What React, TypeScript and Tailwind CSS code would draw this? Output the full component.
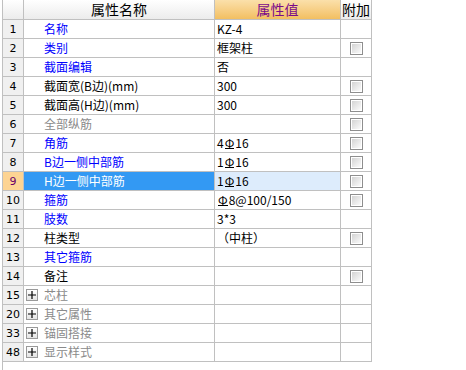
import React from "react";

type Row = {
  no: string;
  name: string;
  value?: string;
  color: "blue" | "black" | "gray";
  check?: boolean;
  group?: boolean;
  selected?: boolean;
};

const rows: Row[] = [
  { no: "1", name: "名称", value: "KZ-4", color: "blue" },
  { no: "2", name: "类别", value: "框架柱", color: "blue", check: true },
  { no: "3", name: "截面编辑", value: "否", color: "blue" },
  { no: "4", name: "截面宽(B边)(mm)", value: "300", color: "black", check: true },
  { no: "5", name: "截面高(H边)(mm)", value: "300", color: "black", check: true },
  { no: "6", name: "全部纵筋", color: "gray", check: true },
  { no: "7", name: "角筋", value: "4|16", color: "blue", check: true },
  { no: "8", name: "B边一侧中部筋", value: "1|16", color: "blue", check: true },
  { no: "9", name: "H边一侧中部筋", value: "1|16", color: "blue", check: true, selected: true },
  { no: "10", name: "箍筋", value: "|8@100/150", color: "blue", check: true },
  { no: "11", name: "肢数", value: "3*3", color: "blue" },
  { no: "12", name: "柱类型", value: "（中柱）", color: "black", check: true },
  { no: "13", name: "其它箍筋", color: "blue" },
  { no: "14", name: "备注", color: "black", check: true },
  { no: "15", name: "芯柱", color: "gray", group: true },
  { no: "20", name: "其它属性", color: "gray", group: true },
  { no: "33", name: "锚固搭接", color: "gray", group: true },
  { no: "48", name: "显示样式", color: "gray", group: true },
];

const font = { fontFamily: '"Noto Sans CJK SC", "DejaVu Sans", sans-serif' };

function Value({ text }: { text: string }) {
  // "|" marks the rebar grade symbol
  const parts = text.split("|");
  return (
    <span className="whitespace-pre">
      {parts.map((p, i) => (
        <React.Fragment key={i}>
          {i > 0 && <span className="mx-[1px] inline-block border-b border-black leading-[11px]">Φ</span>}
          {p}
        </React.Fragment>
      ))}
    </span>
  );
}

function Check() {
  return (
    <div className="h-[13px] w-[13px] border border-[#8e8e8e] bg-white p-[1px]">
      <div className="h-full w-full bg-gradient-to-br from-[#d4d4d4] to-[#fbfbfb]" />
    </div>
  );
}

function Plus() {
  return (
    <div className="flex h-[12px] w-[12px] items-center justify-center border border-[#9a9a9a] bg-gradient-to-b from-white to-[#e4e4e4] text-[11px] leading-none text-black">
      <svg width="8" height="8" viewBox="0 0 8 8">
        <path d="M0 4h8M4 0v8" stroke="#000" strokeWidth="1.2" />
      </svg>
    </div>
  );
}

export default function App() {
  const colorCls = { blue: "text-[#0000ff]", black: "text-black", gray: "text-[#8a8a8a]" };

  return (
    <div className="h-[370px] w-[466px] bg-white text-[12px]" style={font}>
      <div className="ml-[2px] flex h-full w-[370px] flex-col border-l border-[#c0c0c0]">
        {/* header */}
        <div className="flex h-[20px] border-b border-[#c0c0c0]">
          <div className="w-[21px] border-r border-[#c0c0c0] bg-gradient-to-b from-white to-[#ececec]" />
          <div className="flex w-[191px] items-center justify-center border-r border-[#c0c0c0] bg-gradient-to-b from-white to-[#ececec] text-[14px] text-black">
            属性名称
          </div>
          <div className="flex w-[126px] items-center justify-center border-r border-[#c0c0c0] bg-gradient-to-b from-[#fbe0aa] to-[#f2bf60] text-[14px] text-[#7a0a8a]">
            属性值
          </div>
          <div className="flex w-[31px] items-center justify-center border-r border-[#c0c0c0] bg-gradient-to-b from-white to-[#ececec] text-[14px] text-black">
            附加
          </div>
        </div>

        {rows.map((r) => (
          <div key={r.no} className="flex h-[19px] border-b border-[#c0c0c0] leading-none">
            <div
              className={
                "flex w-[21px] items-center justify-center border-r border-[#c0c0c0] text-[12px] " +
                (r.selected ? "bg-[#fdd493] text-[#6a006a]" : "bg-[#f0f0f0] text-black")
              }
              style={{ fontFamily: '"DejaVu Sans", sans-serif', fontSize: 11 }}
            >
              {r.no}
            </div>
            <div
              className={
                "flex w-[191px] items-center border-r border-[#c0c0c0] " +
                (r.selected ? "bg-[#3399f3] text-white" : colorCls[r.color]) +
                (r.group ? " pl-[2px]" : " pl-[20px]")
              }
            >
              {r.group && (
                <div className="mr-[6px]">
                  <Plus />
                </div>
              )}
              {r.name}
            </div>
            <div
              className={
                "flex w-[126px] items-center border-r border-[#c0c0c0] pl-[2px] text-black " +
                (r.selected ? "bg-[#ddecfc]" : "")
              }
            >
              {r.value && <Value text={r.value} />}
            </div>
            <div className="flex w-[31px] items-center justify-center border-r border-[#c0c0c0]">
              {r.check && <Check />}
            </div>
          </div>
        ))}
        <div className="flex-1" />
      </div>
    </div>
  );
}
